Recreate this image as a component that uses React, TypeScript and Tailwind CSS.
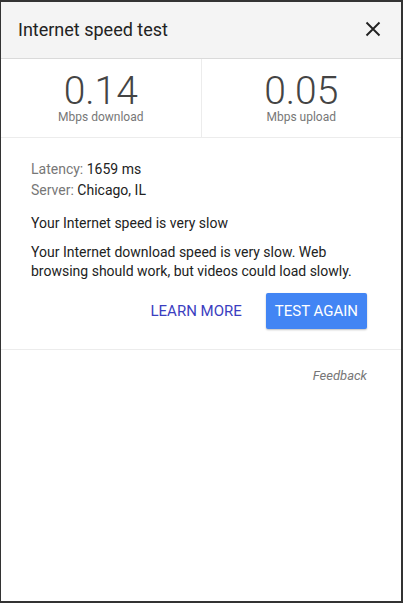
import React from "react";

export default function App() {
  return (
    <div className="w-[403px] h-[603px] bg-[#333] pt-[2px] pl-[1px] pr-[2px] pb-[2px]" style={{ fontFamily: "Roboto, Arial, sans-serif" }}>
      <div className="h-full bg-white flex flex-col">
        <div className="h-[57px] bg-[#f4f4f4] border-b border-[#dadada] flex items-center justify-between pl-[17px] pr-[20px]">
          <span className="text-[18px] text-[#222] mt-[-2px]">Internet speed test</span>
          <svg width="16" height="16" viewBox="0 0 16 16" className="mt-[-2px]">
            <path d="M1.5 1.5 L14.5 14.5 M14.5 1.5 L1.5 14.5" stroke="#222" strokeWidth="1.9" />
          </svg>
        </div>
        <div className="flex h-[79px] border-b border-[#ececec]">
          <div className="flex-1 flex flex-col items-center pt-[16px] border-r border-[#ececec]">
            <span className="text-[39px] leading-[32px] font-light text-[#444]">0.14</span>
            <span className="text-[12px] leading-[14px] text-[#777] mt-[3px]">Mbps download</span>
          </div>
          <div className="flex-1 flex flex-col items-center pt-[16px]">
            <span className="text-[39px] leading-[32px] font-light text-[#444]">0.05</span>
            <span className="text-[12px] leading-[14px] text-[#777] mt-[3px]">Mbps upload</span>
          </div>
        </div>
        <div className="pl-[30px] pr-[34px] pt-[21px] pb-[20px] border-b border-[#ececec] text-[14px] leading-[21px]">
          <div><span className="text-[#777]">Latency: </span><span className="text-[#222]">1659 ms</span></div>
          <div><span className="text-[#777]">Server: </span><span className="text-[#222]">Chicago, IL</span></div>
          <div className="text-[#222] mt-[12px]">Your Internet speed is very slow</div>
          <div className="text-[#222] mt-[9px] leading-[19px]">Your Internet download speed is very slow. Web browsing should work, but videos could load slowly.</div>
          <div className="flex justify-end items-center mt-[12px]">
            <span className="text-[15px] text-[#3b3ec0] mr-[24px]">LEARN MORE</span>
            <span className="h-[36px] px-[9px] flex items-center bg-[#4285f4] text-white text-[15px] rounded-[2px] shadow-[0_1px_2px_rgba(0,0,0,0.25)]">TEST AGAIN</span>
          </div>
        </div>
        <div className="flex justify-end pr-[34px] pt-[16px]">
          <span className="italic text-[13px] text-[#777]">Feedback</span>
        </div>
      </div>
    </div>
  );
}
